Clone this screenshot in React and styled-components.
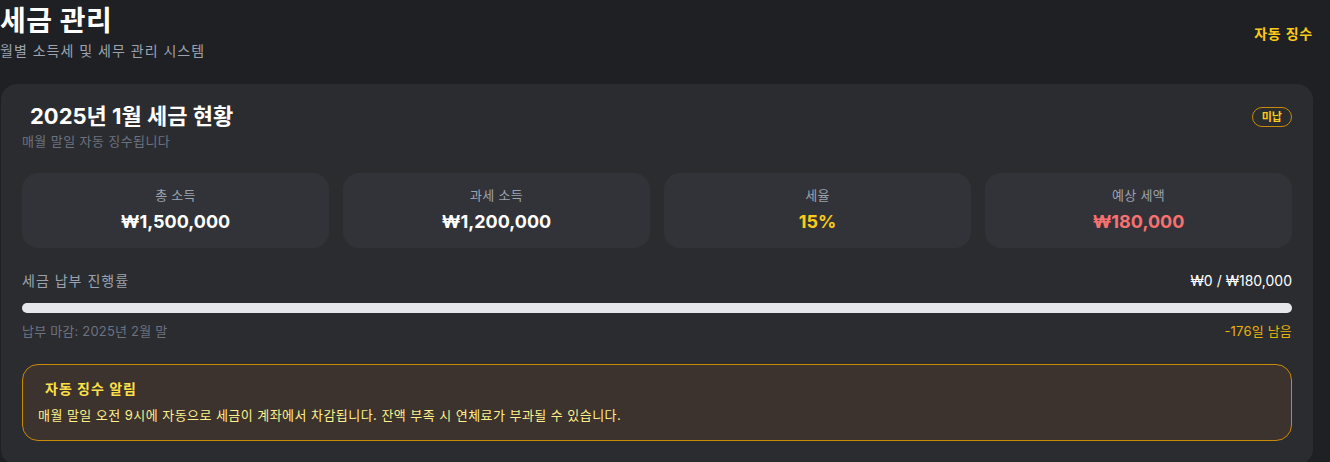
import React from 'react';
import styled, { createGlobalStyle } from 'styled-components';

const BG = '#1f2024';
const CARD = '#2b2c30';
const TILE = '#323338';
const YELLOW = '#facc15';
const AMBER = '#eab308';
const MUTED = '#6b7280';
const SOFT = '#9ca3af';

const GlobalStyle = createGlobalStyle`
  html, body {
    margin: 0;
    padding: 0;
    background: ${BG};
  }
  body {
    font-family: Inter, "Noto Sans CJK KR", "Noto Sans", sans-serif;
    color: #ffffff;
  }
`;

const Page = styled.div`
  width: 1330px;
  height: 462px;
  overflow: hidden;
  box-sizing: border-box;
  padding: 0 17px 0 0;
`;

const Header = styled.header`
  display: flex;
  justify-content: space-between;
  align-items: center;
  height: 66px;
  margin-bottom: 18px;
`;

const TitleBlock = styled.div`
  display: flex;
  flex-direction: column;
  gap: 2px;
  margin-top: -2px;
`;

const PageTitle = styled.h1`
  margin: 0;
  font-size: 28px;
  line-height: 36px;
  font-weight: 700;
  letter-spacing: 0.5px;
`;

const PageSub = styled.p`
  margin: 0;
  font-size: 14px;
  line-height: 20px;
  letter-spacing: 1px;
  color: ${SOFT};
`;

const HeaderLink = styled.span`
  font-size: 14px;
  font-weight: 700;
  letter-spacing: 0.8px;
  color: ${YELLOW};
`;

const Card = styled.section`
  margin-left: 1px;
  background: ${CARD};
  border-radius: 16px;
  padding: 18px 21px 24px;
`;

const CardHead = styled.div`
  display: flex;
  justify-content: space-between;
  align-items: flex-start;
`;

const CardTitle = styled.h2`
  margin: 0 0 0 8px;
  font-size: 22px;
  line-height: 28px;
  font-weight: 700;
`;

const CardSub = styled.p`
  margin: 2px 0 0;
  font-size: 13px;
  line-height: 18px;
  letter-spacing: 0.4px;
  color: ${MUTED};
`;

const Badge = styled.span`
  margin-top: 5px;
  border: 1px solid #ca8a04;
  border-radius: 999px;
  padding: 1px 9px;
  font-size: 11px;
  line-height: 16px;
  font-weight: 700;
  color: ${YELLOW};
`;

const StatGrid = styled.div`
  display: grid;
  grid-template-columns: repeat(4, 1fr);
  gap: 14px;
  margin-top: 23px;
`;

const Stat = styled.div`
  background: ${TILE};
  border-radius: 16px;
  height: 75px;
  box-sizing: border-box;
  padding-top: 13px;
  display: flex;
  flex-direction: column;
  align-items: center;
  gap: 6px;
`;

const StatLabel = styled.span`
  font-size: 13px;
  line-height: 18px;
  letter-spacing: 0.3px;
  color: ${SOFT};
`;

const StatValue = styled.span`
  font-size: 18px;
  line-height: 24px;
  font-weight: 700;
  color: ${({ tone }) => tone || '#ffffff'};
`;

const Row = styled.div`
  display: flex;
  justify-content: space-between;
  align-items: center;
  margin-top: ${({ top }) => top}px;
`;

const ProgressLabel = styled.span`
  font-size: 14px;
  letter-spacing: 1px;
  color: ${SOFT};
`;

const ProgressAmount = styled.span`
  font-size: 14px;
  color: #ffffff;
`;

const Track = styled.div`
  margin-top: 13px;
  height: 10px;
  border-radius: 999px;
  background: #e5e7eb;
  overflow: hidden;
`;

const Fill = styled.div`
  height: 100%;
  background: ${YELLOW};
`;

const Note = styled.span`
  font-size: 13px;
  letter-spacing: 0.2px;
  color: ${({ tone }) => tone || MUTED};
`;

const Alert = styled.div`
  margin-top: 24px;
  border: 1px solid #ca8a04;
  border-radius: 16px;
  background: #3c322e;
  padding: 14px 15px 16px;
`;

const AlertTitle = styled.h3`
  margin: 0 0 0 7px;
  font-size: 14px;
  line-height: 20px;
  font-weight: 700;
  letter-spacing: 1px;
  color: #fde047;
`;

const AlertText = styled.p`
  margin: 7px 0 0;
  font-size: 13px;
  line-height: 18px;
  letter-spacing: 0.45px;
  color: #fef08a;
`;

const stats = [
  { label: '총 소득', value: '₩1,500,000' },
  { label: '과세 소득', value: '₩1,200,000' },
  { label: '세율', value: '15%', tone: YELLOW },
  { label: '예상 세액', value: '₩180,000', tone: '#f87171' },
];

export default function App() {
  const paid = 0;
  const total = 180000;
  return (
    <Page>
      <GlobalStyle />
      <Header>
        <TitleBlock>
          <PageTitle>세금 관리</PageTitle>
          <PageSub>월별 소득세 및 세무 관리 시스템</PageSub>
        </TitleBlock>
        <HeaderLink>자동 징수</HeaderLink>
      </Header>
      <Card>
        <CardHead>
          <div>
            <CardTitle>2025년 1월 세금 현황</CardTitle>
            <CardSub>매월 말일 자동 징수됩니다</CardSub>
          </div>
          <Badge>미납</Badge>
        </CardHead>
        <StatGrid>
          {stats.map((s) => (
            <Stat key={s.label}>
              <StatLabel>{s.label}</StatLabel>
              <StatValue tone={s.tone}>{s.value}</StatValue>
            </Stat>
          ))}
        </StatGrid>
        <Row top={22}>
          <ProgressLabel>세금 납부 진행률</ProgressLabel>
          <ProgressAmount>₩0 / ₩180,000</ProgressAmount>
        </Row>
        <Track>
          <Fill style={{ width: `${(paid / total) * 100}%` }} />
        </Track>
        <Row top={8}>
          <Note>납부 마감: 2025년 2월 말</Note>
          <Note tone={AMBER}>-176일 남음</Note>
        </Row>
        <Alert>
          <AlertTitle>자동 징수 알림</AlertTitle>
          <AlertText>
            매월 말일 오전 9시에 자동으로 세금이 계좌에서 차감됩니다. 잔액 부족 시 연체료가 부과될 수 있습니다.
          </AlertText>
        </Alert>
      </Card>
    </Page>
  );
}
